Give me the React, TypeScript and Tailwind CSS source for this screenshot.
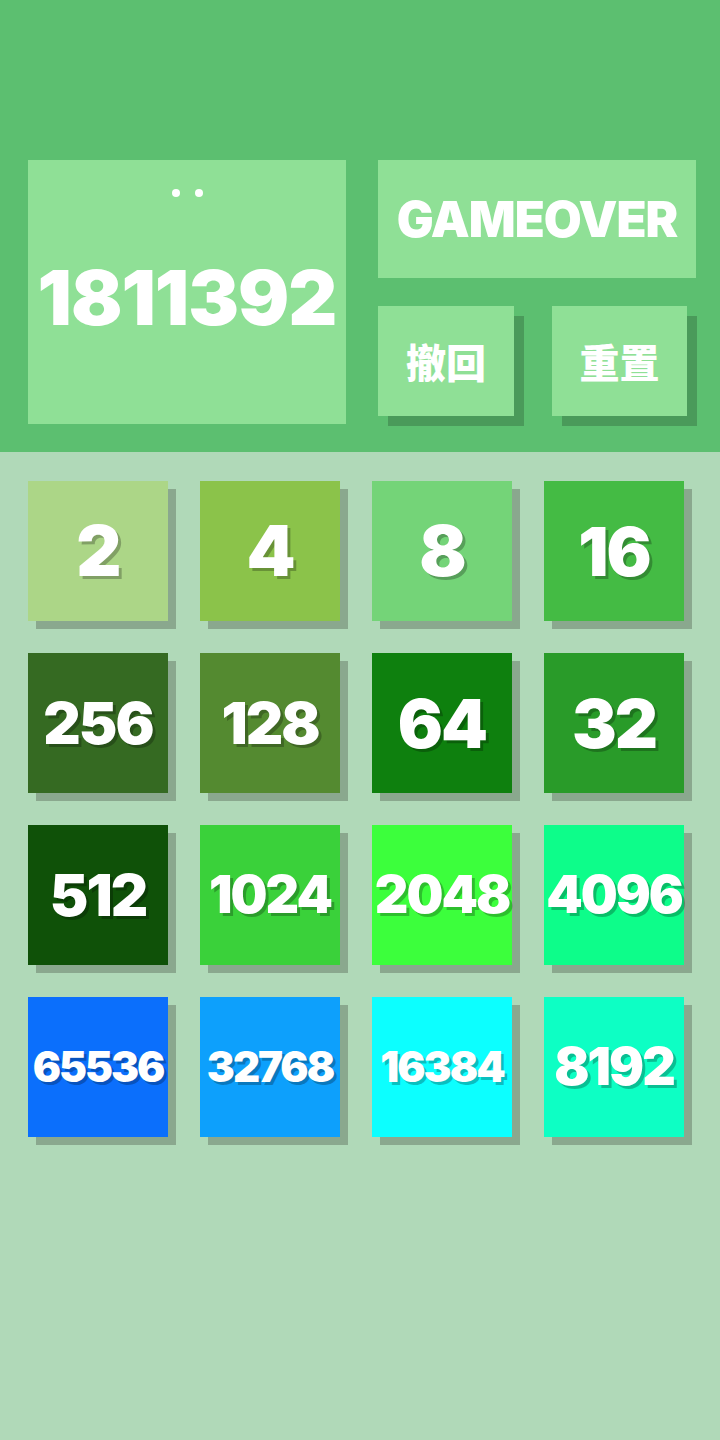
import React from "react";

const tiles: { v: string; bg: string }[] = [
  { v: "2", bg: "bg-[#acd687]" },
  { v: "4", bg: "bg-[#8bc34a]" },
  { v: "8", bg: "bg-[#74d478]" },
  { v: "16", bg: "bg-[#44bb44]" },
  { v: "256", bg: "bg-[#356a22]" },
  { v: "128", bg: "bg-[#548a30]" },
  { v: "64", bg: "bg-[#0e800e]" },
  { v: "32", bg: "bg-[#299b29]" },
  { v: "512", bg: "bg-[#0f5108]" },
  { v: "1024", bg: "bg-[#3ad13a]" },
  { v: "2048", bg: "bg-[#3cff3c]" },
  { v: "4096", bg: "bg-[#0dfd8a]" },
  { v: "65536", bg: "bg-[#0b6ffc]" },
  { v: "32768", bg: "bg-[#0da0fc]" },
  { v: "16384", bg: "bg-[#0cffff]" },
  { v: "8192", bg: "bg-[#0dffc4]" },
];

const sizeFor = (v: string) => {
  switch (v.length) {
    case 1:
      return "text-[70px]";
    case 2:
      return "text-[67px]";
    case 3:
      return "text-[58px]";
    case 4:
      return "text-[52px]";
    default:
      return "text-[42px]";
  }
};

const font = "font-['Inter','Open_Sans','Noto_Sans_CJK_SC',sans-serif]";

export default function App() {
  return (
    <div className={`w-[720px] min-h-[1440px] bg-[#b0d9b8] ${font}`}>
      <div className="h-[452px] bg-[#5cbf70] pl-[28px] pt-[160px] flex gap-[32px]">
        <div className="w-[318px] h-[264px] shrink-0 bg-[#8fe096] flex flex-col items-center pt-[29px]">
          <div className="flex gap-[15px] h-[8px]">
            <div className="w-[8px] h-[8px] rounded-full bg-white" />
            <div className="w-[8px] h-[8px] rounded-full bg-white" />
          </div>
          <div className="mt-[62px] text-[76px] leading-none font-black text-white tracking-[-1px]">
            1811392
          </div>
        </div>
        <div className="w-[318px] shrink-0 flex flex-col gap-[28px]">
          <div className="h-[118px] bg-[#8fe096] flex items-center justify-center text-white font-black text-[49px] leading-none tracking-[-1px]">
            GAMEOVER
          </div>
          <div className="flex gap-[38px]">
            <div className="w-[136px] h-[110px] bg-[#8fe096] shadow-[10px_10px_0_#4a9a5a] flex items-center justify-center text-white font-black text-[40px] leading-none font-['Noto_Sans_CJK_SC',sans-serif]">
              撤回
            </div>
            <div className="w-[135px] h-[110px] bg-[#8fe096] shadow-[10px_10px_0_#4a9a5a] flex items-center justify-center text-white font-black text-[40px] leading-none font-['Noto_Sans_CJK_SC',sans-serif]">
              重置
            </div>
          </div>
        </div>
      </div>
      <div className="pl-[28px] pt-[29px] grid grid-cols-[repeat(4,140px)] gap-[32px]">
        {tiles.map((t) => (
          <div
            key={t.v}
            className={`w-[140px] h-[140px] ${t.bg} shadow-[8px_8px_0_#8aa88e] flex items-center justify-center`}
          >
            <span
              className={`${sizeFor(t.v)} leading-none font-black text-white tracking-[-2px] [text-shadow:3px_3px_0_rgba(0,0,0,0.25)]`}
            >
              {t.v}
            </span>
          </div>
        ))}
      </div>
    </div>
  );
}
